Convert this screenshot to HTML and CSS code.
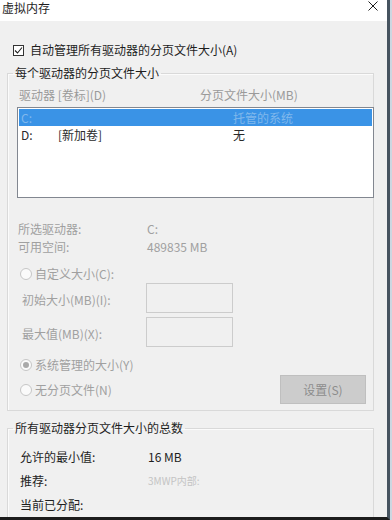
FILE: index.html
```html
<!DOCTYPE html>
<html lang="zh-CN">
<head>
  <meta charset="UTF-8">
  <meta name="viewport" content="width=device-width, initial-scale=1.0">
  <title>虚拟内存</title>
  <link rel="stylesheet" href="styles.css">
</head>
<body>

  <div class="window">
    <!-- Title bar -->
    <div class="titlebar">
      <span class="title">虚拟内存</span>
      <svg class="close" width="10" height="10" viewBox="0 0 10 10">
        <path d="M0.5 0.5 L9.5 9.5 M9.5 0.5 L0.5 9.5" stroke="#1e1e1e" stroke-width="1" fill="none"/>
      </svg>
    </div>

    <div class="check-row">
      <span class="checkbox">
        <svg width="9" height="9" viewBox="0 0 9 9">
          <polyline points="1,4.5 3.5,7 8,1.5" stroke="#1e1e1e" stroke-width="1.1" fill="none"/>
        </svg>
      </span>
      自动管理所有驱动器的分页文件大小(A)
    </div>

    <!-- Per drive group -->
    <fieldset class="group group-drives">
      <legend>每个驱动器的分页文件大小</legend>

      <div class="list-head">
        <span class="col-drive">驱动器 [卷标](D)</span>
        <span>分页文件大小(MB)</span>
      </div>

      <div class="listbox">
        <div class="list-row selected">
          <span class="cell-letter">C:</span>
          <span class="cell-label"></span>
          <span>托管的系统</span>
        </div>
        <div class="list-row">
          <span class="cell-letter">D:</span>
          <span class="cell-label">[新加卷]</span>
          <span>无</span>
        </div>
      </div>

      <div class="info">
        <div class="info-row"><span class="info-label">所选驱动器:</span><span>C:</span></div>
        <div class="info-row"><span class="info-label">可用空间:</span><span>489835 MB</span></div>
      </div>

      <div class="radio-row first"><span class="radio"></span>自定义大小(C):</div>
      <div class="field-row"><span class="field-label">初始大小(MB)(I):</span><span class="textbox"></span></div>
      <div class="field-row"><span class="field-label">最大值(MB)(X):</span><span class="textbox"></span></div>
      <div class="radio-row second"><span class="radio checked"></span>系统管理的大小(Y)</div>
      <div class="radio-row third">
        <span class="radio"></span>无分页文件(N)
        <button class="btn" disabled>设置(S)</button>
      </div>
    </fieldset>

    <!-- Totals group -->
    <fieldset class="group group-total">
      <legend>所有驱动器分页文件大小的总数</legend>
      <div class="total-row first"><span class="total-label">允许的最小值:</span><span>16 MB</span></div>
      <div class="total-row"><span class="total-label">推荐:</span><span class="blurred">3MWP内部:</span></div>
      <div class="total-row"><span class="total-label">当前已分配:</span><span></span></div>
    </fieldset>
  </div>

</body>
</html>
```

FILE: styles.css
```css
body {
  margin: 0;
  background-color: #cbd7e1;
  font-family: "Noto Sans CJK SC", "Liberation Sans", sans-serif;
  font-size: 12px;
  color: #1e1e1e;
}

/* Dialog window */
.window {
  width: 387px;
  height: 517px;
  background-color: #f0f0f0;
  border-right: 3px solid #46535f;
  border-bottom: 3px solid #1c1c1c;
  overflow: hidden;
}

.titlebar {
  height: 21px;
  background-color: #ffffff;
  display: flex;
  justify-content: space-between;
  align-items: flex-start;
}

.title {
  padding-left: 2px;
  line-height: 16px;
}

.close {
  margin: 1px 9px 0 0;
}

/* Auto manage checkbox */
.check-row {
  margin: 21px 0 0 13px;
  line-height: 16px;
  display: flex;
  align-items: center;
}

.checkbox {
  width: 9px;
  height: 9px;
  border: 1px solid #333333;
  background-color: #ffffff;
  margin-right: 6px;
  display: flex;
}

/* Group boxes */
.group {
  box-sizing: border-box;
  width: 367px;
  margin: 7px 0 0 7px;
  padding: 0 0 6px 0;
  border: 1px solid #d9d9d9;
  box-shadow: inset 1px 1px 0 #fbfbfb;
  min-width: 0;
}

.group legend {
  margin-left: 5px;
  padding: 0 2px;
  line-height: 16px;
}

.list-head {
  margin-top: 6px;
  padding-left: 11px;
  line-height: 16px;
  color: #9a9a9a;
  display: flex;
}

.col-drive {
  width: 181px;
}

/* Drive list */
.listbox {
  height: 87px;
  margin: 4px -1px 0 9px;
  padding: 1px;
  border: 1px solid #828790;
  background-color: #ffffff;
}

.list-row {
  height: 17px;
  line-height: 17px;
  padding-left: 2px;
  display: flex;
  color: #2a2a2a;
}

.list-row.selected {
  background-color: #3a93e6;
  color: #80b8ec;
}

.cell-letter {
  width: 37px;
}

.cell-label {
  width: 175px;
}

/* Selected drive info */
.info {
  margin-top: 22px;
  color: #a0a0a0;
}

.info-row {
  line-height: 18px;
  padding-left: 10px;
  display: flex;
}

.info-label {
  width: 129px;
}

/* Radios and fields */
.radio-row {
  display: flex;
  align-items: center;
  padding-left: 12px;
  line-height: 16px;
  color: #a0a0a0;
}

.radio-row.first {
  margin-top: 10px;
}

.radio-row.second {
  margin-top: 10px;
}

.radio-row.third {
  margin-top: 2px;
  height: 29px;
}

.radio {
  box-sizing: border-box;
  width: 12px;
  height: 12px;
  border: 1px solid #c6c6c6;
  border-radius: 50%;
  background-color: #fafafa;
  margin-right: 3px;
  display: flex;
  align-items: center;
  justify-content: center;
}

.radio.checked::after {
  content: "";
  width: 6px;
  height: 6px;
  border-radius: 50%;
  background-color: #a9a9a9;
}

.field-row {
  display: flex;
  align-items: center;
  height: 30px;
  padding-left: 14px;
  color: #a0a0a0;
}

.field-row + .field-row {
  margin-top: 4px;
}

.radio-row.first + .field-row {
  margin-top: 1px;
}

.field-label {
  width: 124px;
  padding-top: 3px;
}

.textbox {
  box-sizing: border-box;
  width: 87px;
  height: 30px;
  border: 1px solid #cccccc;
  background-color: #f0f0f0;
}

.btn {
  margin: 0 7px 0 auto;
  width: 86px;
  height: 29px;
  background-color: #cccccc;
  border: 1px solid #bfbfbf;
  color: #8c8c8c;
  font-family: inherit;
  font-size: 12px;
  padding: 0;
}

/* Totals */
.group-total {
  margin-top: 9px;
  padding-bottom: 20px;
}

.total-row {
  line-height: 24px;
  padding-left: 12px;
  display: flex;
}

.total-row.first {
  margin-top: 9px;
}

.total-label {
  width: 128px;
}

.blurred {
  color: #c4c4c4;
  font-size: 10px;
}
```
